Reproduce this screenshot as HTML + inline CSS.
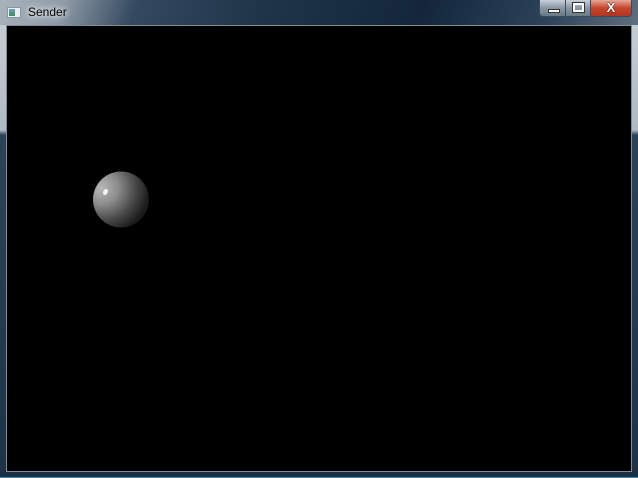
<!DOCTYPE html>
<html><head><meta charset="utf-8"><style>
html,body{margin:0;padding:0;width:638px;height:478px;overflow:hidden;background:#000}
.frame{position:absolute;left:0;top:0;width:638px;height:478px;
background:linear-gradient(110deg,#a9b3bc 0px,#8f9ba7 60px,#34495f 130px,#1f3449 250px,#13263c 400px,#2d4259 520px,#5a6b7b 600px,#6b7a88 638px);}
.side{position:absolute;top:25px;width:7px;height:453px;background:linear-gradient(#c4ccd3 0px,#b0bac3 105px,#2c4257 110px,#1f3347 440px)}
.bot{position:absolute;left:0;top:471px;width:638px;height:7px;background:#1c3043;border-bottom:1px solid #3e8cb4;box-sizing:border-box}
.client{position:absolute;left:6px;top:25px;width:626px;height:447px;background:#000;border:1px solid #7d8d9b;box-sizing:border-box}
.title{position:absolute;left:28px;top:5px;font:12px "Liberation Sans",sans-serif;color:#000;text-shadow:0 0 6px #fff,0 0 8px #fff}
.icon{position:absolute;left:7px;top:7px;width:14px;height:11px;background:#e8eef2;border:1px solid #8a96a0;box-sizing:border-box}
.icon:before{content:"";position:absolute;left:1px;top:1px;width:6px;height:7px;background:linear-gradient(#6aa0b8,#3f8a5a)}
.btn{position:absolute;top:0;height:17px;border:1px solid #394c5e;border-top:none;box-sizing:border-box;border-radius:0 0 4px 4px}
</style></head><body>
<div class="frame"></div>
<div class="side" style="left:0"></div>
<div class="side" style="left:631px"></div>
<div class="bot"></div>
<div class="client"></div>
<div class="icon"></div>
<div class="title">Sender</div>
<div class="btn" style="left:539px;width:27px;background:linear-gradient(#c8d0d8,#8996a3 50%,#6b7987);border-radius:0 0 0 4px"><div style="position:absolute;left:8px;top:9px;width:10px;height:2px;background:#fff;border:1px solid #333"></div></div>
<div class="btn" style="left:565px;width:26px;background:linear-gradient(#c8d0d8,#8996a3 50%,#6b7987);border-radius:0"><div style="position:absolute;left:7px;top:3px;width:7px;height:5px;border:2px solid #fff;outline:1px solid #333"></div></div>
<div class="btn" style="left:590px;width:42px;background:linear-gradient(#e8a898,#c7452e 50%,#b23420);border-radius:0 0 4px 0;color:#fff;font:bold 13px 'Liberation Sans',sans-serif;text-align:center;line-height:16px;text-shadow:0 0 1px #000,0 0 1px #000">X</div>
<svg style="position:absolute;left:0;top:0" width="638" height="478">
<defs><radialGradient id="g" cx="0.2" cy="0.3" r="0.95" fx="0.15" fy="0.3">
<stop offset="0" stop-color="#b8b8b8"/><stop offset="0.3" stop-color="#8c8c8c"/><stop offset="0.6" stop-color="#4a4a4a"/><stop offset="0.85" stop-color="#1c1c1c"/><stop offset="1" stop-color="#0a0a0a"/></radialGradient></defs>
<circle cx="121" cy="199.5" r="28" fill="url(#g)"/>
<ellipse cx="105.5" cy="192" rx="2.2" ry="3.2" fill="#f4f4f4" transform="rotate(30 105.5 192)"/>
</svg>
</body></html>
